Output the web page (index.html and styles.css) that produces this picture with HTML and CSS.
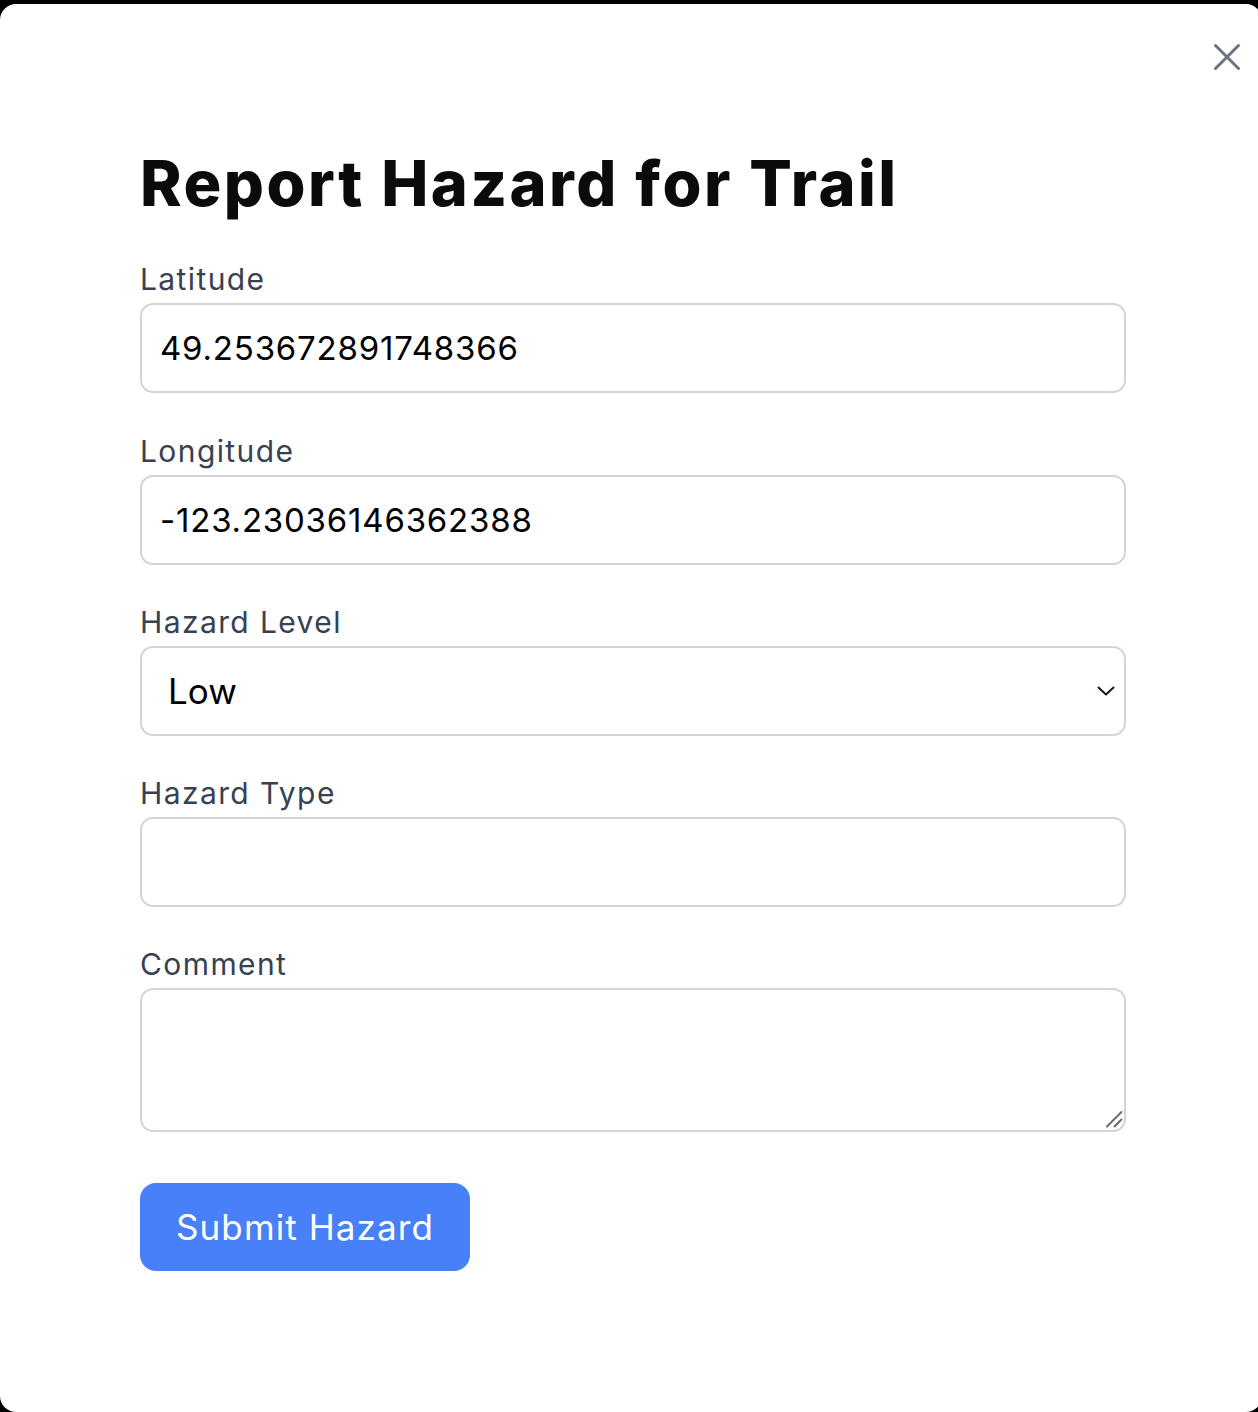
FILE: index.html
```html
<!DOCTYPE html>
<html lang="en">
<head>
<meta charset="utf-8">
<title>Report Hazard for Trail</title>
<link rel="stylesheet" href="styles.css">
</head>
<body>
<div class="modal">
  <button class="close" type="button" aria-label="Close">
    <svg width="28" height="28" viewBox="0 0 28 28" fill="none" stroke="#6b7280" stroke-width="3" stroke-linecap="round">
      <path d="M2.5 2.5 L25.5 25.5 M25.5 2.5 L2.5 25.5"/>
    </svg>
  </button>
  <form class="form">
    <h1 class="title">Report Hazard for Trail</h1>
    <div class="field first">
      <label class="label" for="lat">Latitude</label>
      <input class="input" id="lat" type="text" value="49.253672891748366">
    </div>
    <div class="field">
      <label class="label" for="lng">Longitude</label>
      <input class="input" id="lng" type="text" value="-123.23036146362388">
    </div>
    <div class="field">
      <label class="label" for="level">Hazard Level</label>
      <div class="control-wrap">
        <select class="input select" id="level">
          <option>Low</option>
          <option>Medium</option>
          <option>High</option>
        </select>
        <svg class="chevron" width="18" height="10" viewBox="0 0 18 10" fill="none" stroke="#111827" stroke-width="2" stroke-linecap="round" stroke-linejoin="round">
          <path d="M1.5 1.5 L9 8.5 L16.5 1.5"/>
        </svg>
      </div>
    </div>
    <div class="field">
      <label class="label" for="type">Hazard Type</label>
      <input class="input" id="type" type="text" value="">
    </div>
    <div class="field last">
      <label class="label" for="comment">Comment</label>
      <div class="control-wrap">
        <textarea class="input textarea" id="comment"></textarea>
        <svg class="resizer" width="18" height="18" viewBox="0 0 18 18" fill="none" stroke="#6b6b6b" stroke-width="2" stroke-linecap="round">
          <path d="M2 16.5 L16.5 2 M9.5 16.5 L16.5 9.5"/>
        </svg>
      </div>
    </div>
    <button class="submit" type="button">Submit Hazard</button>
  </form>
</div>
</body>
</html>
```
FILE: styles.css
```css
html, body {
  margin: 0;
  padding: 0;
  background: #000;
  overflow: hidden;
}

.modal {
  position: relative;
  box-sizing: border-box;
  margin-top: 4px;
  width: 1262px;
  height: 1408px;
  background: #fff;
  border-radius: 16px;
  padding: 141px 0 0 140px;
  font-family: "Inter", "Liberation Sans", sans-serif;
}

.close {
  position: absolute;
  top: 39px;
  right: 21px;
  width: 28px;
  height: 28px;
  padding: 0;
  border: 0;
  background: none;
  cursor: pointer;
}

.close svg {
  display: block;
}

.form {
  width: 986px;
  display: flex;
  flex-direction: column;
}

.title {
  margin: 0 0 37px;
  font-size: 63px;
  line-height: 76px;
  font-weight: 800;
  color: #0b0b0b;
  letter-spacing: 2.5px;
}

.field {
  display: flex;
  flex-direction: column;
  margin-bottom: 36px;
}

.field.first {
  margin-bottom: 37px;
}

.field.last {
  margin-bottom: 51px;
}

.label {
  font-size: 30px;
  line-height: 42px;
  color: #374151;
  margin-bottom: 3px;
  letter-spacing: 1.4px;
}

.input {
  box-sizing: border-box;
  width: 100%;
  height: 90px;
  border: 2px solid #d1d5db;
  border-radius: 13px;
  padding: 0 18px;
  font-family: "Inter", "Liberation Sans", sans-serif;
  font-size: 33px;
  letter-spacing: 0.8px;
  color: #000;
  background: #fff;
  outline: none;
}

.control-wrap {
  position: relative;
  display: flex;
}

.select {
  appearance: none;
  -webkit-appearance: none;
  padding-left: 26px;
  font-size: 35px;
  letter-spacing: 0;
}

.chevron {
  position: absolute;
  right: 11px;
  top: 40px;
}

.textarea {
  height: 144px;
  resize: none;
  padding: 12px 18px;
}

.resizer {
  position: absolute;
  right: 3px;
  bottom: 4px;
}

.submit {
  align-self: flex-start;
  box-sizing: border-box;
  height: 88px;
  padding: 0 36px;
  border: 0;
  border-radius: 16px;
  background: #4780f9;
  color: #fff;
  font-family: "Inter", "Liberation Sans", sans-serif;
  font-size: 35px;
  font-weight: 400;
  letter-spacing: 1.1px;
  cursor: pointer;
}
```
